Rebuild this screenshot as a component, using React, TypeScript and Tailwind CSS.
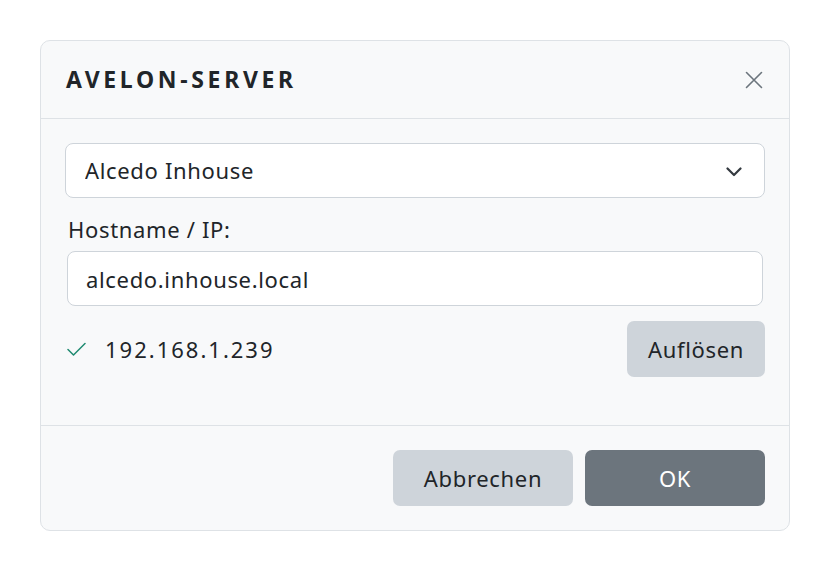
import { useState } from "react";

const font = { fontFamily: '"Noto Sans", "Open Sans", sans-serif' };

export default function App() {
  const [server, setServer] = useState("inhouse");
  const [host, setHost] = useState("alcedo.inhouse.local");

  return (
    <div className="min-h-screen bg-white p-10" style={font}>
      <div className="flex w-[750px] flex-col rounded-[10px] border border-[#dee2e6] bg-[#f8f9fa] text-[22px] tracking-[0.03em] text-[#212529]">
        <div className="flex h-[78px] items-center justify-between border-b border-[#dee2e6] pl-[25px] pr-[23px]">
          <h2 className="m-0 text-[23px] font-bold tracking-[0.16em] text-[#212529]">AVELON-SERVER</h2>
          <button type="button" aria-label="Schließen" className="flex h-6 w-6 items-center justify-center text-[#6c757d]">
            <svg width="18" height="18" viewBox="0 0 18 18" fill="none" stroke="currentColor" strokeWidth="1.6" strokeLinecap="round">
              <path d="M1.5 1.5 16.5 16.5M16.5 1.5 1.5 16.5" />
            </svg>
          </button>
        </div>

        <div className="flex flex-col px-6 pb-12 pt-6">
          <div className="relative">
            <select
              value={server}
              onChange={(e) => setServer(e.currentTarget.value)}
              className="h-[55px] w-full appearance-none rounded-[8px] border border-[#ced4da] bg-white pl-[19px] pr-12 text-[#212529] outline-none"
            >
              <option value="inhouse">Alcedo Inhouse</option>
            </select>
            <svg
              className="pointer-events-none absolute right-[23px] top-[24px]"
              width="16"
              height="10"
              viewBox="0 0 16 10"
              fill="none"
              stroke="#343a40"
              strokeWidth="2.2"
              strokeLinecap="round"
              strokeLinejoin="round"
            >
              <path d="M1.5 1.5 8 8l6.5-6.5" />
            </svg>
          </div>

          <label className="mt-[13px] flex flex-col px-[2px]">
            <span className="pl-[1px] leading-[36px]">Hostname / IP:</span>
            <input
              value={host}
              onChange={(e) => setHost(e.currentTarget.value)}
              className="mt-[4px] h-[55px] w-full rounded-[8px] border border-[#ced4da] bg-white pl-[18px] text-[#212529] outline-none"
            />
          </label>

          <div className="mt-[15px] flex items-center justify-between">
            <div className="flex items-center gap-[19px] pl-[2px]">
              <svg width="19" height="14" viewBox="0 0 19 14" fill="none" stroke="#1f8a70" strokeWidth="1.5" strokeLinecap="round" strokeLinejoin="round">
                <path d="M1 7.5 6.5 13 18 1.5" />
              </svg>
              <span className="tracking-[2px]">192.168.1.239</span>
            </div>
            <button type="button" className="h-[56px] w-[138px] rounded-[7px] bg-[#ced4da] text-[#212529]">
              Auflösen
            </button>
          </div>
        </div>

        <div className="flex justify-end gap-3 border-t border-[#dee2e6] p-6">
          <button type="button" className="h-[56px] w-[180px] rounded-[7px] bg-[#ced4da] text-[#212529]">
            Abbrechen
          </button>
          <button type="button" className="h-[56px] w-[180px] rounded-[7px] bg-[#6c757d] text-white">
            OK
          </button>
        </div>
      </div>
    </div>
  );
}
